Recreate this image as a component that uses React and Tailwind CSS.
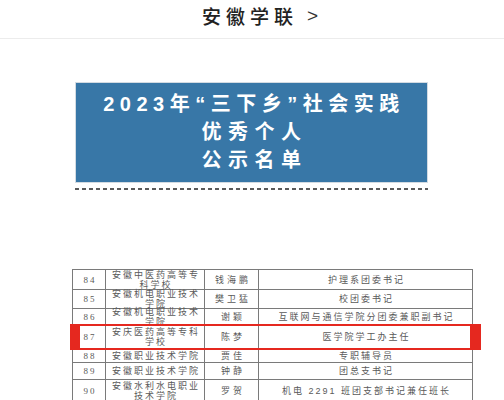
import React from 'react';

const rows = [
  { n: '84', school: ['安徽中医药高等专', '科学校'], name: '钱海鹏', duty: '护理系团委书记', h: 'h-[20px]' },
  { n: '85', school: ['安徽机电职业技术', '学院'], name: '樊卫猛', duty: '校团委书记', h: 'h-[19px]' },
  { n: '86', school: ['安徽机电职业技术', '学院'], name: '谢颖', duty: '互联网与通信学院分团委兼职副书记', h: 'h-[16px]' },
  { n: '87', school: ['安庆医药高等专科', '学校'], name: '陈梦', duty: '医学院学工办主任', h: 'h-[25px]' },
  { n: '88', school: ['安徽职业技术学院'], name: '贾佳', duty: '专职辅导员', h: 'h-[13px]' },
  { n: '89', school: ['安徽职业技术学院'], name: '钟静', duty: '团总支书记', h: 'h-[17px]' },
  { n: '90', school: ['安徽水利水电职业', '技术学院'], name: '罗贺', duty: '机电 2291 班团支部书记兼任班长', h: 'h-[22px]' },
];

const cell = "flex flex-col items-center justify-center text-[9px] leading-[10px] tracking-[2px] pl-[2px] text-[#5a5a5a] whitespace-nowrap";

export default function App() {
  return (
    <div className="w-[504px] h-[400px] overflow-hidden bg-white" style={{ fontFamily: '"Liberation Sans", "Noto Sans CJK SC", sans-serif' }}>
      {/* header */}
      <div className="h-[39px] border-b border-[#ececec] flex justify-center items-start pt-[5px] pl-[16px]">
        <span className="text-[19px] leading-[22px] font-medium text-[#222] tracking-[5px] font-['Noto_Sans_CJK_SC',sans-serif]">安徽学联</span>
        <span className="text-[19px] leading-[22px] text-[#333] ml-[9px] font-medium">&gt;</span>
      </div>

      {/* blue banner */}
      <div className="mt-[43px] ml-[75px] w-[353px] h-[101px] bg-[#3877a7] border border-[#d3dbe2] flex flex-col items-center pt-[7px] text-white font-bold">
        <div className="text-[20px] leading-[28px] tracking-[5.5px] pl-[5px]">2023年“三下乡”社会实践</div>
        <div className="text-[20px] leading-[28px] tracking-[6.5px] pl-[6px]">优秀个人</div>
        <div className="text-[20px] leading-[28px] tracking-[6.5px] pl-[6px]">公示名单</div>
      </div>

      {/* dashed line */}
      <div className="mt-[5px] ml-[75px] w-[353px] h-[2px] bg-[repeating-linear-gradient(to_right,#5a5a5a_0_4px,transparent_4px_7px)]"></div>

      {/* table */}
      <div className="relative mt-[79px] ml-[72px] w-[401px] border-t border-l border-r border-[#7a7a7a]">
        {rows.map((r) => (
          <div key={r.n} className={`flex ${r.h} border-b border-[#7a7a7a]`}>
            <div className={`${cell} w-[33px] border-r border-[#7a7a7a] font-['Liberation_Serif',serif] tracking-[0px] pl-0`}>{r.n}</div>
            <div className={`${cell} w-[99px] border-r border-[#7a7a7a]`}>
              {r.school.map((s, i) => <div key={i}>{s}</div>)}
            </div>
            <div className={`${cell} w-[54px] border-r border-[#7a7a7a] tracking-[3px] pl-[3px]`}>{r.name}</div>
            <div className={`${cell} flex-1`}>{r.duty}</div>
          </div>
        ))}
        <div className="absolute left-[-3px] top-[54px] w-[411px] h-[26px] border-l-[10px] border-r-[11px] border-y-[2px] border-[#e5281f]"></div>
      </div>
    </div>
  );
}
